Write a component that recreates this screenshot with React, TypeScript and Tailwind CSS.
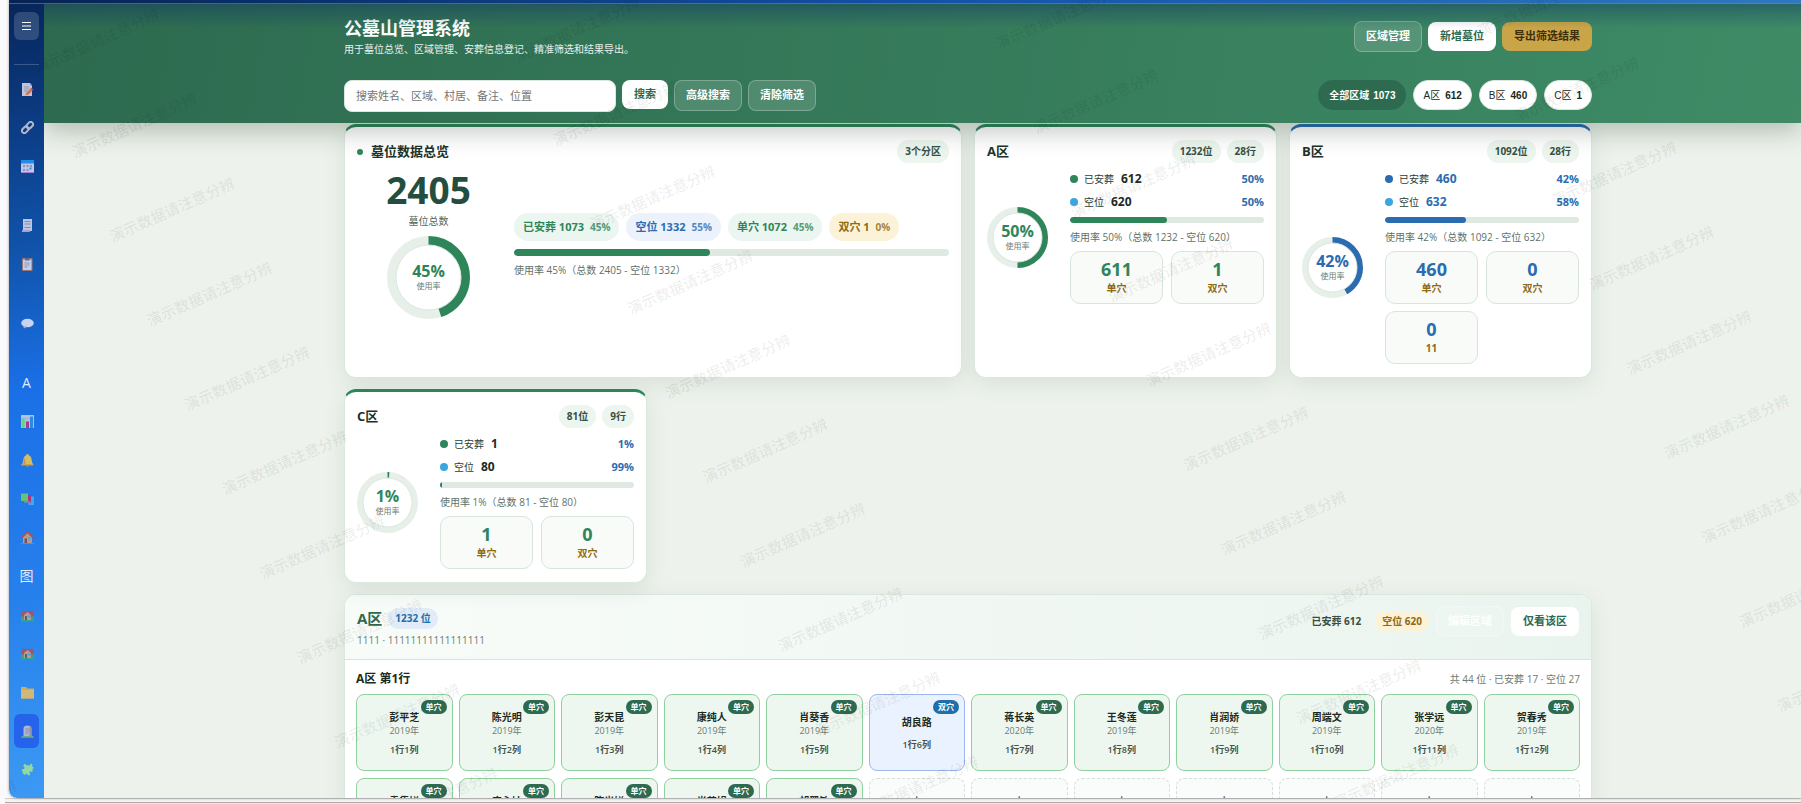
import React from 'react';

const uiFont = "font-['Open_Sans','Noto_Sans_CJK_SC',sans-serif]";
const controlFont = "font-['Liberation_Sans','Noto_Sans_CJK_SC',sans-serif]";

const GREEN = '#2f855a';
const BLUE = '#2b6cb0';

// Sidebar glyphs, all drawn on a 13x13 canvas
const icons: Record<string, React.ReactNode> = {
  memo: (
    <>
      <path d="M1 0h8l2 2.500V13H1z" fill="#d5d2e6" />
      <path d="M9 0l2 2.500H9z" fill="#9d9ab8" />
      <path d="M3 4h5M3 6h5M3 8h3" stroke="#9a97b3" strokeWidth=".8" />
      <path d="M4.500 12.500l1-3 4-4 2 2-4 4z" fill="#ee7a3d" />
      <path d="M9.500 5.500l1-.8 2 2-1 .8z" fill="#e0405a" />
    </>
  ),
  link: (
    <g fill="none" stroke="#c4c6d6" strokeWidth="2">
      <rect x="-3.600" y="-2.400" width="7.200" height="4.800" rx="2.400" transform="translate(4.200 8.800) rotate(-45)" />
      <rect x="-3.600" y="-2.400" width="7.200" height="4.800" rx="2.400" transform="translate(8.800 4.200) rotate(-45)" />
    </g>
  ),
  calendar: (
    <>
      <rect y="0" width="13" height="13" rx="1.500" fill="#d6d4ee" />
      <path d="M1.500 0h10A1.500 1.500 0 0 1 13 1.500V3.500H0V1.500A1.500 1.500 0 0 1 1.500 0z" fill="#2196f3" />
      <path d="M2 5h2v2H2zM5.500 5h2v2h-2zM9 5h2v2H9zM2 9h2v2H2zM5.500 9h2v2h-2z" fill="#9d9bbb" />
      <path d="M8.500 7.500h2v2h-2z" fill="#3f8ee8" />
      <path d="M1 12.500h11" stroke="#a98bd8" />
    </>
  ),
  receipt: (
    <>
      <path d="M2 0h9v12H2z" fill="#cfd3ea" />
      <path d="M1 11h8v2H1z" fill="#bba7de" />
      <path d="M3.500 2.500h6M3.500 5h6M3.500 8.500h6" stroke="#8c93b5" strokeWidth="1.200" />
    </>
  ),
  clipboard: (
    <>
      <rect x="1" y="0" width="10.500" height="13" rx="1" fill="#a9796b" />
      <path d="M2 1.500h8.500V12H2z" fill="#d9d9ee" />
      <path d="M4 0h4.500v2.500H4z" fill="#6b6c86" />
      <path d="M3.500 5h5M3.500 7h5M3.500 9h3" stroke="#8e90b0" strokeWidth=".8" />
    </>
  ),
  chat: (
    <>
      <ellipse cx="6.500" cy="6" rx="6.300" ry="4.300" fill="#dcdff6" />
      <path d="M2 8.500l1 3 3-1.800z" fill="#bdb4e2" />
    </>
  ),
  chart: (
    <>
      <rect width="13" height="13" rx=".5" fill="#c2cbe6" />
      <path d="M0 3.500h13M0 7h13" stroke="#a3add0" strokeWidth=".6" />
      <path d="M.8 3.500h3V13h-3z" fill="#6fdc80" />
      <path d="M5 6.500h3V13H5z" fill="#c2307d" />
      <path d="M9 1.500h3V13H9z" fill="#2b8fe0" />
    </>
  ),
  bell: (
    <>
      <path d="M6.500 0c.8 0 1.200.6 1.200 1.200C10 2 10.500 4 10.700 6c.1 2 .8 3.200 1.500 4.200H.8c.8-1 1.400-2.200 1.500-4.200C2.500 4 3 2 5.300 1.200 5.300.6 5.700 0 6.500 0z" fill="#e8c555" />
      <path d="M4 3.500C3 5 3.300 8 2 10h2.500z" fill="#d99550" />
      <path d="M.3 10h12v1.500H.3z" fill="#dca749" />
      <circle cx="6.500" cy="12" r="1" fill="#d08b3f" />
    </>
  ),
  swatches: (
    <>
      <path d="M7.500 3.500H13V12H7.500z" fill="#45aef0" />
      <path d="M4 2h6v7.500H4z" fill="#bf2f71" />
      <path d="M3 8h6v2H3z" fill="#7486c8" />
      <path d="M0 .5h7V8H0z" fill="#6dcb6b" />
    </>
  ),
  house: (
    <>
      <path d="M2 6l4.500-4.500L11 6v6H2z" fill="#c99e83" />
      <path d="M0 6.500L6.500 0 13 6.500l-1.200 1L6.500 2.300 1.200 7.500z" fill="#c44a48" />
      <path d="M3.500 7.500h2.500V12H3.500z" fill="#70535c" />
      <path d="M7.500 6h2.500v2.500H7.500z" fill="#42b4e6" />
      <path d="M0 12h13v1H0z" fill="#45ad70" />
    </>
  ),
  village: (
    <>
      <path d="M0 7h13v5.500H0z" fill="#35a97c" />
      <path d="M0 4.500l2-3 2.500 1 2-1 2 1 2.500-1 2 3-.5 3H.5z" fill="#b34e59" />
      <path d="M3 6l3.500-3L10 6v5H3z" fill="#c7a08a" />
      <path d="M4 7h2v4H4z" fill="#6e5566" />
      <path d="M7 6.500h2.500v2H7z" fill="#3ca9df" />
    </>
  ),
  folder: (
    <>
      <path d="M0 1h5l1.500 1.500H13V12.500H0z" fill="#d8b25a" />
      <path d="M0 4h13v8.500H0z" fill="#e3bd6c" />
    </>
  ),
  tomb: (
    <>
      <path d="M2.500 11.500V3.500C2.500 1.500 4 .5 6.500.5s4 1 4 3v8z" fill="#bfbfca" />
      <path d="M8.500 1v10.500h2v-8c0-1.400-.7-2.200-2-2.500z" fill="#9a9aa9" />
      <path d="M4.500 4h4M4.500 6h4M4.500 8h3" stroke="#8b8b9a" strokeWidth=".8" />
      <path d="M0 12.800c0-1.600 2-2 3-1.800h7c2-.2 3 .4 3 1.800z" fill="#79b07c" />
    </>
  ),
  puzzle: (
    <path
      d="M3 1.500c1-1 2.300 0 2 1.300l1.500-1L8 3c1-.3.600-2 2-2.200 1.500 0 2 1.700.8 2.300l2 1.600-1.500 2c.8.800.5 2.300-.8 2.300-.8 0-1-.8-1.500-1L8.300 9.500c1 .3 1.200 2.700-.3 3-1.400 0-1.500-1.500-2-2L3.500 12 1.300 9.700c1-.9.700-1.200-.3-1.700C0 6.800 1.600 5.400 2.800 6.300L3.700 4.500C2.400 4 2 2.500 3 1.500z"
      fill="#9be09a"
    />
  ),
};

type NavItem = { icon?: string; text?: string; label: string; active?: boolean };

const navItems: (NavItem | null)[] = [
  { icon: 'memo', label: '记录' },
  { icon: 'link', label: '链接' },
  { icon: 'calendar', label: '日历' },
  null,
  { icon: 'receipt', label: '票据' },
  { icon: 'clipboard', label: '清单' },
  null,
  { icon: 'chat', label: '消息' },
  null,
  { text: 'A', label: '文字' },
  { icon: 'chart', label: '统计' },
  { icon: 'bell', label: '提醒' },
  { icon: 'swatches', label: '色卡' },
  { icon: 'house', label: '房屋' },
  { text: '图', label: '图片' },
  { icon: 'village', label: '村居' },
  { icon: 'village', label: '社区' },
  { icon: 'folder', label: '文件' },
  { icon: 'tomb', label: '公墓山', active: true },
  { icon: 'puzzle', label: '插件' },
];

const areaChips = [
  { name: 'A区', count: 612 },
  { name: 'B区', count: 460 },
  { name: 'C区', count: 1 },
];

const summaryPills = [
  { label: '已安葬 1073', percent: '45%', className: 'bg-[#ebf6f0] text-[#2f855a]' },
  { label: '空位 1332', percent: '55%', className: 'bg-[#ebf2fc] text-[#2b6cb0]' },
  { label: '单穴 1072', percent: '45%', className: 'bg-[#ebf6f0] text-[#2f855a]' },
  { label: '双穴 1', percent: '0%', className: 'bg-[#fcf2d8] text-[#8f6a14]' },
];

const areas = [
  { name: 'A区', total: 1232, rows: 28, used: 612, free: 620, percent: 50, blue: false, kinds: [['611', '单穴'], ['1', '双穴']] },
  { name: 'B区', total: 1092, rows: 28, used: 460, free: 632, percent: 42, blue: true, kinds: [['460', '单穴'], ['0', '双穴'], ['0', '11']] },
  { name: 'C区', total: 81, rows: 9, used: 1, free: 80, percent: 1, blue: false, kinds: [['1', '单穴'], ['0', '双穴']] },
];

type Plot = { name?: string; year?: string; double?: boolean };

const plots: Plot[] = [
  { name: '彭平芝', year: '2019年' },
  { name: '陈光明', year: '2019年' },
  { name: '彭天昆', year: '2019年' },
  { name: '康纯人', year: '2019年' },
  { name: '肖葵香', year: '2019年' },
  { name: '胡良路', double: true },
  { name: '蒋长英', year: '2020年' },
  { name: '王冬莲', year: '2019年' },
  { name: '肖润娇', year: '2019年' },
  { name: '周端文', year: '2019年' },
  { name: '张学远', year: '2020年' },
  { name: '贺春秀', year: '2019年' },
  { name: '袁集娣', year: '2019年' },
  { name: '唐永妹', year: '2019年' },
  { name: '陈光娣', year: '2019年' },
  { name: '肖若娟', year: '2019年' },
  { name: '胡翠敏', year: '2019年' },
  {}, {}, {}, {}, {}, {}, {},
];

const Sidebar = () => (
  <nav className="relative z-20 flex w-[35px] shrink-0 flex-col items-center rounded-bl-lg bg-linear-[172deg,#07265a_0%,#0c3d86_16%,#1155ad_32%,#1a6fe6_48%,#2680ec_74%,#3c99f3_100%] pb-[11px]">
    <button aria-label="菜单" className="mt-2 flex h-7 w-[25px] items-center justify-center rounded-md bg-white/16">
      <svg width="9" height="8" viewBox="0 0 9 8" aria-hidden="true">
        <path d="M0 .5h9M0 4h9M0 7.500h9" stroke="#fff" />
      </svg>
    </button>
    <div className="mt-6 h-px w-[25px] bg-white/20" />
    <div className="mt-[7px] flex flex-1 flex-col justify-between">
      {navItems.map((item, index) =>
        item ? (
          <button
            key={index}
            aria-label={item.label}
            className={`flex h-[34px] w-[25px] items-center justify-center rounded-md text-sm leading-none text-[#e4ebfb] ${item.active ? 'bg-[#2563eb]' : ''}`}
          >
            {item.icon ? (
              <svg width="13" height="13" viewBox="0 0 13 13" className="ml-px opacity-90" aria-hidden="true">
                {icons[item.icon]}
              </svg>
            ) : (
              item.text
            )}
          </button>
        ) : (
          <div key={index} className="h-4" />
        )
      )}
    </div>
  </nav>
);

const ghostButton = 'h-[31px] rounded-lg border border-white/25 bg-white/14 px-[11px] font-bold text-white';
const whiteButton = 'h-[29px] rounded-lg bg-white px-3 font-bold text-[#2d6a4f]';

const PageHeader = () => (
  <header className={`relative z-10 h-[119px] shrink-0 bg-linear-[100deg,#2d6a4f,#3e8b66] pr-[209px] pl-[300px] shadow-[0_8px_24px_rgba(10,30,20,0.26)] ${controlFont}`}>
    <div className="pointer-events-none absolute inset-x-0 top-0 h-6 bg-linear-to-b from-[#0c2f66]/40 to-transparent" />
    <div className="flex items-start justify-between pt-[13px]">
      <div>
        <h1 className="text-lg leading-[25px] font-bold text-white">公墓山管理系统</h1>
        <p className="text-[10px] leading-4 text-white/90">用于墓位总览、区域管理、安葬信息登记、精准筛选和结果导出。</p>
      </div>
      <div className="mt-1 flex items-center gap-[6px] text-[11px]">
        <button className={ghostButton}>区域管理</button>
        <button className={whiteButton}>新增墓位</button>
        <button className="h-[29px] rounded-lg bg-[#c9a548] px-3 font-bold text-[#3d2f0c]">导出筛选结果</button>
      </div>
    </div>
    <div className="mt-[22px] flex items-start justify-between">
      <form className="flex items-start gap-[6px] text-[11px]" onSubmit={(e) => e.preventDefault()}>
        <input
          type="text"
          aria-label="搜索"
          placeholder="搜索姓名、区域、村居、备注、位置"
          className="h-8 w-[272px] rounded-lg border border-[#dbe7df] bg-white px-[11px] text-gray-800 placeholder:text-[#757575]"
        />
        <button type="submit" className={whiteButton}>搜索</button>
        <button type="button" className={ghostButton}>高级搜索</button>
        <button type="button" className={ghostButton}>清除筛选</button>
      </form>
      <div className="flex gap-[7px] text-[10px]">
        <button className="h-[30px] rounded-full bg-[#2d6a4f] px-[11px] font-bold text-white">
          全部区域<span className="ml-1">1073</span>
        </button>
        {areaChips.map((chip) => (
          <button key={chip.name} className="h-[30px] rounded-full border border-[#dbe7df] bg-white px-[9px] text-[#1b2a22]">
            {chip.name}<span className="ml-[5px] font-bold">{chip.count}</span>
          </button>
        ))}
      </div>
    </div>
  </header>
);

const Donut = ({ percent, size, ring, color }: { percent: number; size: number; ring: number; color: string }) => {
  const radius = (size - ring) / 2;
  const center = size / 2;
  return (
    <div className="relative shrink-0">
      <svg width={size} height={size} className="block" aria-hidden="true">
        <circle cx={center} cy={center} r={radius} fill="#fff" stroke="#e6f0e9" strokeWidth={ring} />
        <circle
          cx={center}
          cy={center}
          r={radius}
          fill="none"
          stroke={color}
          strokeWidth={ring}
          pathLength={100}
          strokeDasharray={`${percent} 100`}
          transform={`rotate(-90 ${center} ${center})`}
        />
        <circle cx={center} cy={center} r={radius - ring / 2} fill="none" stroke="#dce7e0" />
      </svg>
      <div className="absolute inset-0 flex flex-col items-center justify-center">
        <strong className="mb-[3px] text-base leading-[14px] font-bold" style={{ color }}>{percent}%</strong>
        <span className="text-[8px] leading-[10px] text-[#6b7c74]">使用率</span>
      </div>
    </div>
  );
};

const Tag = ({ children }: { children: React.ReactNode }) => (
  <span className="rounded-full bg-[#edf5ef] px-2 text-[10px] leading-[23px] font-bold text-[#355045]">{children}</span>
);

const cardBase = 'rounded-xl border border-t-[3px] border-[#dbe7df] bg-white px-3 pt-[13px] pb-[13px] shadow-[0_6px_22px_rgba(30,70,50,0.1)]';

const OverviewCard = () => (
  <section className={`col-span-2 border-t-[#2f855a] ${cardBase}`}>
    <div className="flex items-center justify-between">
      <h2 className="flex items-center gap-2 text-[13px] leading-[23px] font-bold text-[#1b3329]">
        <span className="size-[6px] rounded-full bg-[#2f855a]" />
        墓位数据总览
      </h2>
      <Tag>3个分区</Tag>
    </div>
    <div className="mt-2 flex items-center gap-[14px]">
      <div className="flex w-[143px] shrink-0 flex-col items-center">
        <strong className="text-[37px] leading-[38px] font-bold text-[#234e3f]">2405</strong>
        <span className="mt-1 mb-[7px] text-[10px] leading-4 text-[#52665c]">墓位总数</span>
        <Donut percent={45} size={83} ring={9} color={GREEN} />
      </div>
      <div className="flex-1">
        <div className="flex gap-[7px]">
          {summaryPills.map((pill) => (
            <span key={pill.label} className={`rounded-full px-[9px] text-[11px] leading-7 font-bold ${pill.className}`}>
              {pill.label}<span className="ml-[6px] text-[10px] opacity-80">{pill.percent}</span>
            </span>
          ))}
        </div>
        <div className="mt-2 h-[7px] overflow-hidden rounded-full bg-[#dfe9e2]">
          <div className="h-full w-[45%] rounded-full bg-[#2f855a]" />
        </div>
        <p className="mt-[7px] text-[10px] leading-[15px] text-[#5f7168]">使用率 45%（总数 2405 - 空位 1332）</p>
      </div>
    </div>
  </section>
);

const AreaCard = ({ area }: { area: (typeof areas)[number] }) => {
  const color = area.blue ? BLUE : GREEN;
  const numberColor = area.blue ? 'text-[#2b6cb0]' : 'text-[#1b2a22]';
  const share = [
    { label: '已安葬', value: area.used, percent: area.percent, dot: area.blue ? 'bg-[#2b6cb0]' : 'bg-[#2f855a]' },
    { label: '空位', value: area.free, percent: 100 - area.percent, dot: 'bg-[#3ba5e0]' },
  ];

  return (
    <section className={`${cardBase} ${area.blue ? 'border-t-[#2b6cb0]' : 'border-t-[#2f855a]'}`}>
      <div className="flex items-center justify-between">
        <h2 className="text-[13px] leading-[23px] font-bold text-[#1b3329]">{area.name}</h2>
        <div className="flex gap-[6px]">
          <Tag>{area.total}位</Tag>
          <Tag>{area.rows}行</Tag>
        </div>
      </div>
      <div className="mt-2 flex items-center gap-[22px]">
        <Donut percent={area.percent} size={61} ring={6} color={color} />
        <div className="flex flex-1 flex-col gap-[7px]">
          {share.map((row) => (
            <div key={row.label} className="flex items-center text-[10px] leading-4 text-[#2b3d34]">
              <span className={`mr-[6px] size-2 rounded-full ${row.dot}`} />
              {row.label}
              <strong className={`ml-[7px] text-xs leading-4 ${numberColor}`}>{row.value}</strong>
              <strong className="ml-auto text-[11px] leading-4 text-[#2b6cb0]">{row.percent}%</strong>
            </div>
          ))}
          <div className="h-[6px] overflow-hidden rounded-full bg-[#dfe9e2]">
            <div className="h-full rounded-full" style={{ width: `${area.percent}%`, backgroundColor: color }} />
          </div>
          <p className="text-[10px] leading-[14px] whitespace-nowrap text-[#5f7168]">
            使用率 {area.percent}%（总数 {area.total} - 空位 {area.free}）
          </p>
          <div className="grid grid-cols-2 gap-x-2 gap-y-[7px]">
            {area.kinds.map(([count, label]) => (
              <div key={label} className="flex h-[53px] flex-col items-center justify-center rounded-[10px] border border-[#d6e6db] bg-[#f9fbf9]">
                <strong className="mb-[3px] text-lg leading-[18px] font-bold" style={{ color }}>{count}</strong>
                <span className="text-[10px] leading-[15px] font-bold text-[#8f6a14]">{label}</span>
              </div>
            ))}
          </div>
        </div>
      </div>
    </section>
  );
};

const PlotCell = ({ plot, position }: { plot: Plot; position: string }) => {
  if (!plot.name) {
    return (
      <button className="flex h-[77px] flex-col items-center justify-center rounded-lg border border-dashed border-[#d3dfd7] bg-[#fafcfb]">
        <span className="text-lg leading-6 text-[#2d6a4f]">+</span>
        <span className="text-[9px] leading-3 text-[#6b7c74]">空位</span>
        <span className="mt-[7px] text-[9px] leading-[14px] font-semibold text-[#4a5b52]">{position}</span>
      </button>
    );
  }

  return (
    <button className={`relative flex h-[77px] flex-col items-center justify-center rounded-lg border ${plot.double ? 'border-[#9db8ee] bg-[#ebf2ff]' : 'border-[#8fd19e] bg-[#edf7f0]'}`}>
      <span className={`absolute top-[5px] right-[5px] rounded-full px-[5px] text-[8px] leading-[14px] font-bold text-white ${plot.double ? 'bg-[#1f6fa8]' : 'bg-[#2d6a4f]'}`}>
        {plot.double ? '双穴' : '单穴'}
      </span>
      <strong className="text-[10px] leading-[18px] font-bold text-[#1b2a22]">{plot.name}</strong>
      {plot.year && <span className="text-[9px] leading-[10px] text-[#6b7c74]">{plot.year}</span>}
      <span className="mt-[7px] text-[9px] leading-[14px] font-semibold text-[#43544b]">{position}</span>
    </button>
  );
};

const AreaSection = () => (
  <section className="mt-[11px] overflow-hidden rounded-xl border border-[#dbe7df] bg-white shadow-[0_6px_22px_rgba(30,70,50,0.1)]">
    <div className="flex items-start justify-between border-b border-[#d6e6db] bg-linear-to-r from-[#f8fcf9] to-[#eaf4ee] px-3 pt-[11px] pb-[11px]">
      <div className="pt-[2px]">
        <div className="flex items-center gap-[6px]">
          <h2 className="text-[15px] leading-[21px] font-bold text-[#2d6a4f]">A区</h2>
          <span className="rounded-full bg-[#e1ecf8] px-[7px] text-[10px] leading-[21px] font-bold text-[#1f6fa8]">1232 位</span>
        </div>
        <p className="mt-[3px] text-[10px] leading-4 text-[#6b7c74]">1111 · 11111111111111111</p>
      </div>
      <div className="flex items-center gap-[7px] text-[11px]">
        <span className="rounded-full bg-[#edf5ef] px-[7px] text-[10px] leading-[21px] font-bold text-[#355045]">已安葬 612</span>
        <span className="rounded-full bg-[#fcf2d8] px-[7px] text-[10px] leading-[21px] font-bold text-[#8f6a14]">空位 620</span>
        <button className={ghostButton}>编辑区域</button>
        <button className={whiteButton}>仅看该区</button>
      </div>
    </div>
    <div className="px-[11px] pt-[9px] pb-3">
      <div className="mb-[5px] flex items-center justify-between">
        <h3 className="text-xs leading-5 font-bold text-[#1b2a22]">A区 第1行</h3>
        <span className="text-[10px] leading-5 text-[#6b7c74]">共 44 位 · 已安葬 17 · 空位 27</span>
      </div>
      <div className="grid grid-cols-12 gap-x-[6px] gap-y-[7px]">
        {plots.map((plot, index) => (
          <PlotCell key={index} plot={plot} position={`1行${index + 1}列`} />
        ))}
      </div>
    </div>
  </section>
);

// Tilted notice repeated over the whole window
const Watermark = () => (
  <svg className="pointer-events-none absolute inset-0 z-30 size-full" aria-hidden="true">
    <g transform="translate(66 158) rotate(-24)" fill="#000" fillOpacity="0.08" fontSize="15" fontWeight="500">
      {Array.from({ length: 18 }, (_, row) =>
        Array.from({ length: 5 }, (_, col) => (
          <text key={`${row}-${col}`} x={(col - 1) * 444} y={(row - 2) * 92.3}>
            演示数据请注意分辨
          </text>
        ))
      )}
    </g>
  </svg>
);

export default function App() {
  return (
    <div className={`flex h-screen flex-col overflow-hidden bg-[#fafafc] ${uiFont}`}>
      <div className="relative ml-[9px] flex min-h-0 flex-1 flex-col overflow-hidden rounded-bl-lg shadow-[0_0_3px_rgba(0,0,0,0.4)]">
        <div className="relative z-20 h-1 shrink-0 border-b border-[#4a90e2]/60 bg-linear-to-r from-[#062352] via-[#1351a8] to-[#2f78bf]" />
        <div className="flex min-h-0 flex-1">
          <Sidebar />
          <div className="flex min-w-0 flex-1 flex-col bg-[#edf3ec]">
            <PageHeader />
            <main className="min-h-0 flex-1 overflow-hidden pt-px pr-[209px] pl-[300px]">
              <div className="grid grid-cols-4 gap-x-3 gap-y-[11px]">
                <OverviewCard />
                {areas.map((area) => (
                  <AreaCard key={area.name} area={area} />
                ))}
              </div>
              <AreaSection />
            </main>
          </div>
        </div>
        <Watermark />
      </div>
      <div className="ml-[5px] h-[6px] shrink-0 border-t border-[#cfcfd1] bg-[#f3f3f5]">
        <div className="mt-[3px] h-[2px] border-t border-[#b9a8a2] bg-[#f3e4df]" />
      </div>
    </div>
  );
}
